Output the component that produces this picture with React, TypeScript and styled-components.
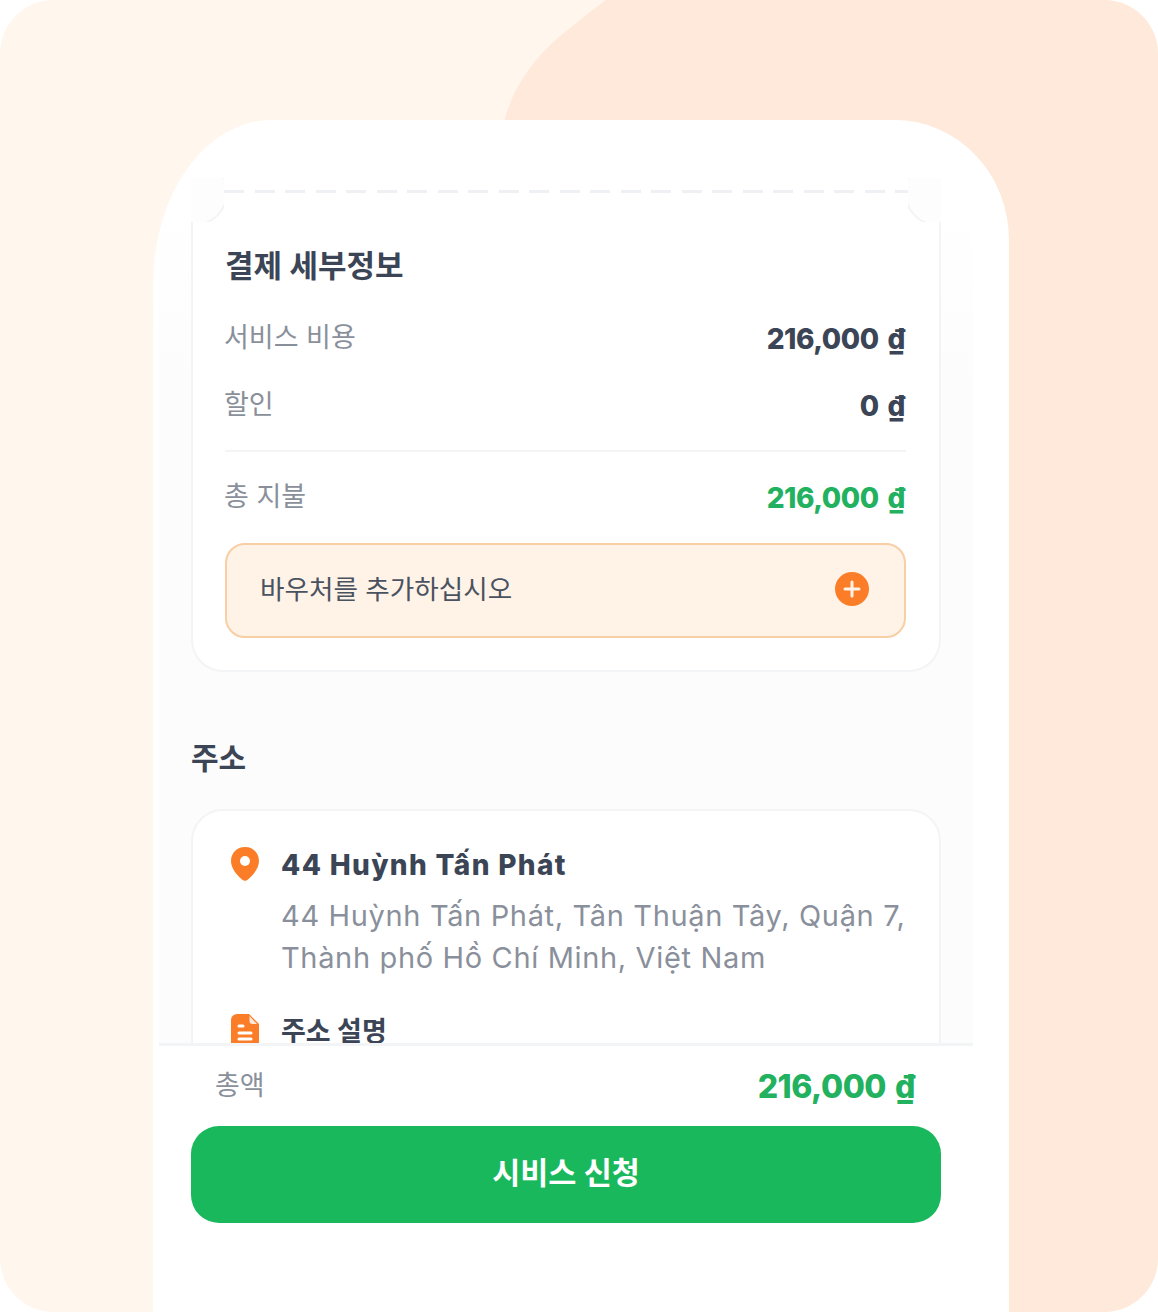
import React from "react";
import styled, { createGlobalStyle } from "styled-components";

const Global = createGlobalStyle`
  html, body { margin: 0; padding: 0; background: #fff; }
  body { font-family: "Noto Sans CJK KR", "Noto Sans", sans-serif; }
  * { box-sizing: border-box; }
`;

const KR = `"Inter", "Noto Sans CJK KR", sans-serif`;

const Frame = styled.div`
  position: relative;
  width: 1158px;
  height: 1312px;
  border-radius: 54px;
  overflow: hidden;
  background: #fff6ed;
  padding: 120px 149px 0 153px;
`;
const Blob = styled.svg`
  position: absolute;
  inset: 0;
`;
const Phone = styled.div`
  position: relative;
  height: 1192px;
  background: #fff;
  border-radius: 118px 114px 0 0 / 165px 120px 0 0;
  overflow: hidden;
  padding: 58px 36px 0 6px;
  display: flex;
  flex-direction: column;
`;
const Screen = styled.div`
  height: 865px;
  flex: none;
  overflow: hidden;
  padding: 0 32px;
  background: linear-gradient(#fff 0, #fff 30px, #fcfcfd 220px);
`;
const Tear = styled.div`
  display: flex;
  height: 44px;
`;
const Notch = styled.div<{ $right?: boolean }>`
  position: relative;
  width: 33px;
  height: 44px;
  flex: none;
  overflow: hidden;
  &::before {
    content: "";
    position: absolute;
    top: -20px;
    ${(p) => (p.$right ? "right: -31px;" : "left: -31px;")}
    width: 64px;
    height: 64px;
    border-radius: 50%;
    background: #fdfdfe;
    border: 2px solid #f3f4f6;
  }
`;
const TearBody = styled.div`
  flex: 1;
  background: #fff;
  padding-top: 12px;
`;
const Dashes = styled.div`
  height: 3px;
  background: repeating-linear-gradient(90deg, #eef0f3 0 20px, transparent 20px 30.5px);
`;
const Card = styled.div`
  background: #fff;
  border: 2px solid #f3f4f6;
  border-top: 0;
  border-radius: 0 0 32px 32px;
  padding: 24px 33px 32px 32px;
  height: 450px;
`;
const Title = styled.h2`
  margin: 0;
  font: 700 31px/40px ${KR};
  color: #3b4556;
`;
const Row = styled.div<{ $top: number }>`
  display: flex;
  justify-content: space-between;
  align-items: center;
  height: 40px;
  padding-right: 1px;
  margin-top: ${(p) => p.$top}px;
`;
const Label = styled.span`
  font: 400 27px/40px ${KR};
  color: #8a909b;
  position: relative;
  top: -1px;
  left: -1px;
`;
const Amount = styled.span<{ $green?: boolean; $size?: number }>`
  font: 800 ${(p) => p.$size ?? 28}px/40px "Inter", sans-serif;
  letter-spacing: -0.45px;
  color: ${(p) => (p.$green ? "#22b15f" : "#3b4556")};
`;
const Dong = styled.span`
  margin-left: 9px;
`;
const Divider = styled.div`
  height: 2px;
  background: #f3f4f6;
  margin-top: 24px;
`;
const Voucher = styled.div`
  margin-top: 25px;
  height: 95px;
  background: #fff3e8;
  border: 2px solid #f8cea4;
  border-radius: 20px;
  padding: 0 35px 0 33px;
  display: flex;
  align-items: center;
  justify-content: space-between;
`;
const VoucherText = styled.span`
  font: 400 26.600px/40px ${KR};
  color: #4a5260;
  position: relative;
  top: -2px;
`;
const PlusIcon = styled.svg`
  margin-bottom: 3px;
`;
const Section = styled.h3`
  margin: 66px 0 0;
  font: 700 30px/40px ${KR};
  color: #3b4556;
`;
const AddressCard = styled.div`
  margin-top: 31px;
  background: #fff;
  border: 2px solid #f3f4f6;
  border-radius: 32px;
  padding: 34px 34px 60px 38px;
  display: grid;
  grid-template-columns: 36px 1fr;
  column-gap: 14px;
`;
const IconCell = styled.div`
  padding-top: 2px;
`;
const AddrTitle = styled.div`
  font: 800 28px/40px "Inter", "Noto Sans CJK KR", sans-serif;
  letter-spacing: 1.35px;
  color: #3b4556;
  white-space: nowrap;
`;
const AddrText = styled.div`
  margin-top: 10px;
  font: 400 29px/42px "Inter", sans-serif;
  letter-spacing: 0.65px;
  color: #8a909b;
  white-space: nowrap;
`;
const NoteTitle = styled.div`
  font: 700 27px/40px ${KR};
  color: #3b4556;
  margin-top: 33px;
`;
const NoteIcon = styled.div`
  margin-top: 35px;
`;
const Footer = styled.div`
  flex: 1;
  border-top: 3px solid #f3f4f6;
  background: #fff;
  padding: 0 32px;
`;
const TotalRow = styled.div`
  display: flex;
  align-items: center;
  justify-content: space-between;
  height: 82px;
  margin-bottom: -2px;
  padding: 0 26px 0 25px;
`;
const CTA = styled.button`
  display: block;
  width: 750px;
  height: 97px;
  border: 0;
  border-radius: 28px;
  background: #19b85c;
  color: #fff;
  font: 700 30.500px/40px ${KR};
  padding: 0 0 4px;
`;

export default function App() {
  return (
    <>
      <Global />
      <Frame>
        <Blob width="1158" height="1312" viewBox="0 0 1158 1312">
          <path
            d="M503 125 C512 90 530 62 560 36 C575 24 592 10 606 0 L1158 0 L1158 1312 L503 1312 Z"
            fill="#fee9db"
          />
        </Blob>
        <Phone>
          <Screen>
            <Tear>
              <Notch />
              <TearBody>
                <Dashes />
              </TearBody>
              <Notch $right />
            </Tear>
            <Card>
              <Title>결제 세부정보</Title>
              <Row $top={33}>
                <Label>서비스 비용</Label>
                <Amount>
                  216,000<Dong>₫</Dong>
                </Amount>
              </Row>
              <Row $top={27}>
                <Label>할인</Label>
                <Amount>
                  0<Dong>₫</Dong>
                </Amount>
              </Row>
              <Divider />
              <Row $top={26}>
                <Label>총 지불</Label>
                <Amount $green>
                  216,000<Dong>₫</Dong>
                </Amount>
              </Row>
              <Voucher>
                <VoucherText>바우처를 추가하십시오</VoucherText>
                <PlusIcon width="34" height="34" viewBox="0 0 34 34">
                  <circle cx="17" cy="17" r="17" fill="#fb7d28" />
                  <path d="M17 10v14M10 17h14" stroke="#fff3e8" strokeWidth="3" strokeLinecap="round" />
                </PlusIcon>
              </Voucher>
            </Card>
            <Section>주소</Section>
            <AddressCard>
              <IconCell>
                <svg width="28" height="34" viewBox="0 0 28 34">
                  <path
                    d="M14 0C6 0 0 6 0 14c0 8 7 15 11 18.500a4.500 4.500 0 0 0 6 0C21 29 28 22 28 14 28 6 22 0 14 0Z"
                    fill="#fb7d28"
                  />
                  <circle cx="14" cy="14" r="5" fill="#fff" />
                </svg>
              </IconCell>
              <div>
                <AddrTitle>44 Huỳnh Tấn Phát</AddrTitle>
                <AddrText>
                  44 Huỳnh Tấn Phát, Tân Thuận Tây, Quận 7,
                  <br />
                  Thành phố Hồ Chí Minh, Việt Nam
                </AddrText>
              </div>
              <NoteIcon>
                <svg width="28" height="34" viewBox="0 0 28 34">
                  <path
                    d="M6 0h12l10 10v18a6 6 0 0 1-6 6H6a6 6 0 0 1-6-6V6a6 6 0 0 1 6-6Z"
                    fill="#fb7d28"
                  />
                  <path d="M18.500 2v5a3 3 0 0 0 3 3h4.500Z" fill="#ffe9d8" />
                  <path d="M8 12h4M8 19h12M8 25h12" stroke="#fff" strokeWidth="3" strokeLinecap="round" />
                </svg>
              </NoteIcon>
              <NoteTitle>주소 설명</NoteTitle>
            </AddressCard>
          </Screen>
          <Footer>
            <TotalRow>
              <Label>총액</Label>
              <Amount $green $size={32}>
                216,000<Dong>₫</Dong>
              </Amount>
            </TotalRow>
            <CTA>시비스 신청</CTA>
          </Footer>
        </Phone>
      </Frame>
    </>
  );
}
